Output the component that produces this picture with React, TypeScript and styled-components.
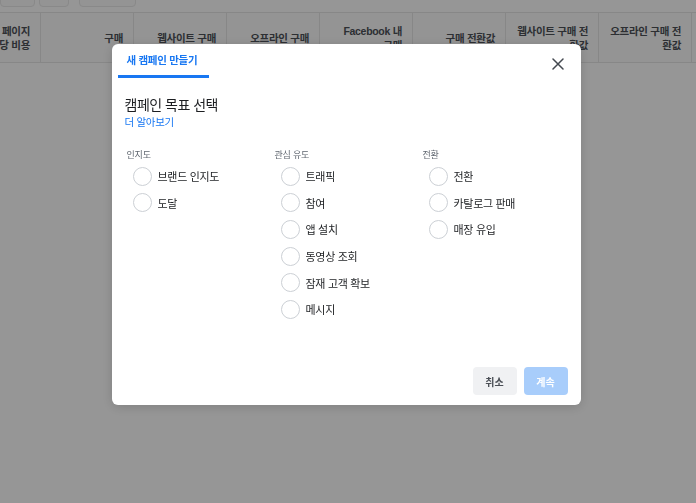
import { FC } from 'react'
import styled, { createGlobalStyle } from 'styled-components'

const GlobalStyle = createGlobalStyle`
	html, body {
		margin: 0;
		padding: 0;
		width: 696px;
		height: 503px;
		overflow: hidden;
		background: #ffffff;
		font-family: "Liberation Sans", "Noto Sans CJK KR", sans-serif;
	}
`

const columns: string[][] = [
	['페이지', '당 비용'],
	['구매'],
	['웹사이트 구매'],
	['오프라인 구매'],
	['Facebook 내', '구매'],
	['구매 전환값'],
	['웹사이트 구매 전', '환값'],
	['오프라인 구매 전', '환값'],
]

const groups = [
	{ title: '인지도', items: ['브랜드 인지도', '도달'] },
	{ title: '관심 유도', items: ['트래픽', '참여', '앱 설치', '동영상 조회', '잠재 고객 확보', '메시지'] },
	{ title: '전환', items: ['전환', '카탈로그 판매', '매장 유입'] },
]

const App: FC = () => {
	return (
		<>
			<GlobalStyle />
			<Page>
				<Toolbar>
					<ToolButton $w={33} />
					<ToolButton $w={28} />
					<ToolButton $w={55} $ml={6} />
				</Toolbar>
				<HeaderRow>
					{columns.map((lines, i) => (
						<HeaderCell key={i}>
							{lines.map((l, j) => (
								<span key={j}>{l}</span>
							))}
						</HeaderCell>
					))}
				</HeaderRow>
			</Page>
			<Overlay>
				<Modal>
					<TabBar>
						<Tab>새 캠페인 만들기</Tab>
						<CloseButton aria-label="닫기">
							<svg width="12" height="12" viewBox="0 0 12 12">
								<path d="M1 1 L11 11 M11 1 L1 11" stroke="#444950" strokeWidth="1.5" strokeLinecap="round" />
							</svg>
						</CloseButton>
					</TabBar>
					<Body>
						<Title>캠페인 목표 선택</Title>
						<LearnMore>더 알아보기</LearnMore>
						<Groups>
							{groups.map((g) => (
								<Group key={g.title}>
									<GroupLabel>{g.title}</GroupLabel>
									{g.items.map((item) => (
										<Option key={item}>
											<Radio />
											<OptionText>{item}</OptionText>
										</Option>
									))}
								</Group>
							))}
						</Groups>
					</Body>
					<Footer>
						<Button>취소</Button>
						<Button $primary>계속</Button>
					</Footer>
				</Modal>
			</Overlay>
		</>
	)
}

const Page = styled.div`
	width: 696px;
	height: 503px;
	background: #fafafa;
	overflow: hidden;
`

const Toolbar = styled.div`
	display: flex;
	align-items: flex-start;
	gap: 4px;
	height: 20px;
	margin-top: -8px;
`

const ToolButton = styled.div<{ $w: number; $ml?: number }>`
	width: ${(p) => p.$w}px;
	height: 13px;
	margin-left: ${(p) => p.$ml ?? 0}px;
	border-radius: 4px;
	background: #f7f7f7;
	border: 1px solid #e4e4e4;
`

const HeaderRow = styled.div`
	display: flex;
	height: 49px;
	margin-left: -52px;
	background: #f7f7f7;
	border-top: 1px solid #e2e2e2;
	border-bottom: 1px solid #e2e2e2;
`

const HeaderCell = styled.div`
	flex: 0 0 93px;
	box-sizing: border-box;
	display: flex;
	flex-direction: column;
	justify-content: center;
	align-items: flex-end;
	padding-right: 10px;
	border-right: 1px solid #e2e2e2;
	font-size: 10.5px;
	font-weight: bold;
	letter-spacing: -0.3px;
	line-height: 14px;
	color: #4b4f56;
	white-space: nowrap;
`

const Overlay = styled.div`
	position: fixed;
	inset: 0;
	background: rgba(0, 0, 0, 0.4);
	display: flex;
	justify-content: center;
	align-items: flex-start;
	padding-top: 44px;
	padding-right: 4px;
`

const Modal = styled.div`
	width: 469px;
	height: 361px;
	background: #ffffff;
	border-radius: 6px;
	display: flex;
	flex-direction: column;
	box-shadow: 0 2px 12px rgba(0, 0, 0, 0.15);
`

const TabBar = styled.div`
	display: flex;
	align-items: flex-end;
	justify-content: space-between;
	height: 34px;
	padding: 0 16px 0 6px;
`

const Tab = styled.div`
	font-size: 10.5px;
	font-weight: bold;
	letter-spacing: -0.3px;
	white-space: nowrap;
	color: #1877f2;
	padding: 0 12px 8px 9px;
	border-bottom: 3px solid #1877f2;
`

const CloseButton = styled.button`
	border: none;
	background: none;
	padding: 0;
	width: 14px;
	height: 14px;
	margin-bottom: 7px;
	display: flex;
	align-items: center;
	justify-content: center;
	cursor: pointer;
`

const Body = styled.div`
	flex: 1;
	padding: 17px 13px 0 13px;
`

const Title = styled.div`
	font-size: 14px;
	letter-spacing: -0.5px;
	line-height: 20px;
	color: #1c1e21;
`

const LearnMore = styled.a`
	display: block;
	font-size: 10.5px;
	letter-spacing: -0.3px;
	line-height: 14px;
	color: #1877f2;
	cursor: pointer;
`

const Groups = styled.div`
	display: grid;
	grid-template-columns: 148px 148px 148px;
	margin-top: 20px;
	padding-left: 2px;
`

const Group = styled.div`
	display: flex;
	flex-direction: column;
`

const GroupLabel = styled.div`
	font-size: 9px;
	letter-spacing: -0.2px;
	line-height: 12px;
	color: #606770;
	margin-bottom: 2px;
`

const Option = styled.label`
	display: flex;
	align-items: center;
	gap: 6px;
	height: 26.6px;
	padding-left: 6px;
	cursor: pointer;
`

const Radio = styled.span`
	width: 17px;
	height: 17px;
	border-radius: 50%;
	border: 1px solid #ccd0d5;
	background: #ffffff;
`

const OptionText = styled.span`
	font-size: 11px;
	letter-spacing: -0.3px;
	color: #1c1e21;
`

const Footer = styled.div`
	display: flex;
	justify-content: flex-end;
	gap: 7px;
	padding: 0 13px 10px 0;
`

const Button = styled.button<{ $primary?: boolean }>`
	height: 28px;
	width: 44px;
	border: none;
	border-radius: 4px;
	font-family: inherit;
	font-size: 10px;
	font-weight: bold;
	background: ${(p) => (p.$primary ? '#a8cdfb' : '#f0f1f3')};
	color: ${(p) => (p.$primary ? '#ffffff' : '#4b4f56')};
	cursor: pointer;
`

export default App
